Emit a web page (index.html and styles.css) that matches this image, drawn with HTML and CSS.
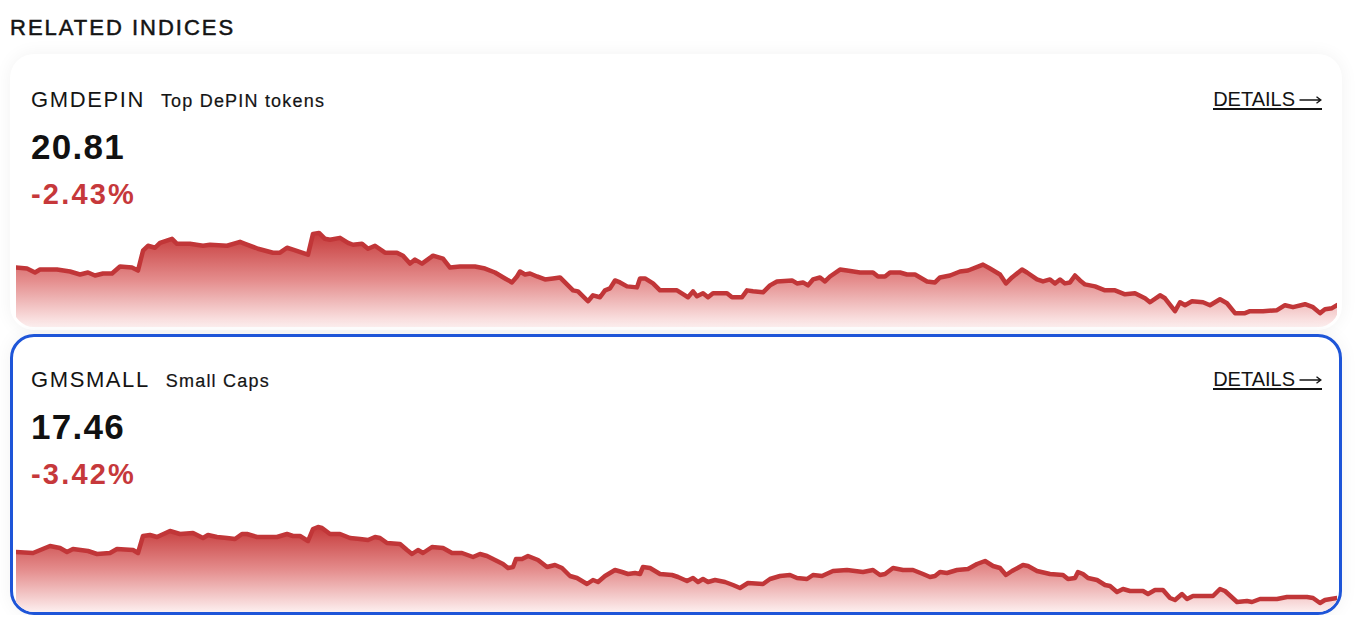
FILE: index.html
```html
<!DOCTYPE html>
<html lang="en">
<head>
<meta charset="utf-8">
<title>Related Indices</title>
<link rel="stylesheet" href="styles.css">
</head>
<body>
<section class="related">
  <h2 class="related-title">RELATED INDICES</h2>
  <div class="card-list">
    <article class="card">
      <div class="card-head">
        <div class="card-names">
          <span class="card-symbol">GMDEPIN</span>
          <span class="card-name">Top DePIN tokens</span>
        </div>
        <a class="card-link" href="#">DETAILS<svg class="arrow" viewBox="0 0 23 10" width="23" height="10"><path d="M0.5 5 H21.5 M17.5 1.8 L21.8 5 L17.5 8.2" fill="none" stroke="#141414" stroke-width="1.4"/></svg></a>
      </div>
      <div class="card-value">20.81</div>
      <div class="card-change">-2.43%</div>
      <div class="card-chart">
        <svg class="spark" viewBox="16 220 1321 107" preserveAspectRatio="none">
          <defs>
            <linearGradient id="fill1" gradientUnits="userSpaceOnUse" x1="0" y1="232" x2="0" y2="327">
              <stop offset="0" stop-color="#c63b3b"/>
              <stop offset="0.5" stop-color="#e48c8c"/>
              <stop offset="1" stop-color="#fdefef"/>
            </linearGradient>
          </defs>
          <path class="spark-area" fill="url(#fill1)" d="M16,267 L27,268 35,272 40,269 57,269 70,271 80,274 88,272 95,275 103,273 112,273 120,266 132,267 138,270 143,250 148,245 155,247 160,242 172,238 177,243 190,243 203,245 210,244 227,245 240,241 245,243 258,248 273,252 280,252 287,247 293,249 308,254 313,233 319,232 325,238 330,239 340,237 348,242 353,244 362,243 368,248 375,245 385,252 397,252 403,255 410,263 415,259 422,263 433,255 443,258 450,267 460,266 475,266 485,268 495,272 505,278 512,282 517,276 520,271 525,274 530,273 537,276 545,279 553,278 560,277 573,290 578,291 588,301 593,295 600,297 605,290 610,288 615,280 620,282 627,286 637,287 640,278 645,278 653,283 660,290 677,290 685,295 688,297 693,291 697,296 703,293 708,297 713,293 727,293 732,297 742,297 747,290 753,291 763,292 770,285 777,281 792,280 797,283 803,282 808,285 813,279 820,277 825,281 830,276 840,269 847,270 860,272 873,272 878,276 885,276 890,272 900,272 907,274 915,274 927,281 935,282 940,277 950,275 960,271 968,270 983,264 990,268 1000,274 1006,283 1012,277 1022,269 1027,272 1037,279 1043,281 1050,279 1055,283 1060,279 1065,283 1070,282 1075,275 1080,280 1085,284 1095,286 1105,290 1115,290 1125,294 1135,293 1145,298 1150,302 1160,295 1165,298 1175,311 1180,302 1185,305 1192,301 1203,302 1210,305 1220,299 1227,303 1235,313 1245,313 1250,311 1263,311 1277,310 1285,305 1293,307 1305,304 1313,307 1320,313 1325,309 1332,308 1337,305 L1337,327 L16,327 Z"/>
          <path class="spark-line" vector-effect="non-scaling-stroke" d="M16,267 L27,268 35,272 40,269 57,269 70,271 80,274 88,272 95,275 103,273 112,273 120,266 132,267 138,270 143,250 148,245 155,247 160,242 172,238 177,243 190,243 203,245 210,244 227,245 240,241 245,243 258,248 273,252 280,252 287,247 293,249 308,254 313,233 319,232 325,238 330,239 340,237 348,242 353,244 362,243 368,248 375,245 385,252 397,252 403,255 410,263 415,259 422,263 433,255 443,258 450,267 460,266 475,266 485,268 495,272 505,278 512,282 517,276 520,271 525,274 530,273 537,276 545,279 553,278 560,277 573,290 578,291 588,301 593,295 600,297 605,290 610,288 615,280 620,282 627,286 637,287 640,278 645,278 653,283 660,290 677,290 685,295 688,297 693,291 697,296 703,293 708,297 713,293 727,293 732,297 742,297 747,290 753,291 763,292 770,285 777,281 792,280 797,283 803,282 808,285 813,279 820,277 825,281 830,276 840,269 847,270 860,272 873,272 878,276 885,276 890,272 900,272 907,274 915,274 927,281 935,282 940,277 950,275 960,271 968,270 983,264 990,268 1000,274 1006,283 1012,277 1022,269 1027,272 1037,279 1043,281 1050,279 1055,283 1060,279 1065,283 1070,282 1075,275 1080,280 1085,284 1095,286 1105,290 1115,290 1125,294 1135,293 1145,298 1150,302 1160,295 1165,298 1175,311 1180,302 1185,305 1192,301 1203,302 1210,305 1220,299 1227,303 1235,313 1245,313 1250,311 1263,311 1277,310 1285,305 1293,307 1305,304 1313,307 1320,313 1325,309 1332,308 1337,305"/>
        </svg>
      </div>
    </article>
    <article class="card card-active">
      <div class="card-head">
        <div class="card-names">
          <span class="card-symbol">GMSMALL</span>
          <span class="card-name">Small Caps</span>
        </div>
        <a class="card-link" href="#">DETAILS<svg class="arrow" viewBox="0 0 23 10" width="23" height="10"><path d="M0.5 5 H21.5 M17.5 1.8 L21.8 5 L17.5 8.2" fill="none" stroke="#141414" stroke-width="1.4"/></svg></a>
      </div>
      <div class="card-value">17.46</div>
      <div class="card-change">-3.42%</div>
      <div class="card-chart">
        <svg class="spark" viewBox="16 500 1321 111" preserveAspectRatio="none">
          <defs>
            <linearGradient id="fill2" gradientUnits="userSpaceOnUse" x1="0" y1="526" x2="0" y2="611">
              <stop offset="0" stop-color="#c63b3b"/>
              <stop offset="0.5" stop-color="#e48c8c"/>
              <stop offset="1" stop-color="#fdefef"/>
            </linearGradient>
          </defs>
          <path class="spark-area" fill="url(#fill2)" d="M16,551 L33,552 50,545 60,547 67,551 73,548 88,550 97,553 110,552 117,548 133,549 138,552 143,535 150,534 157,536 170,530 180,533 193,532 203,537 208,534 217,536 227,537 235,538 242,533 247,533 257,536 277,536 287,533 293,535 300,535 308,540 313,528 318,526 322,527 330,533 340,533 350,537 360,538 368,539 375,536 380,537 387,542 400,543 407,549 412,553 418,549 423,552 432,546 443,547 452,552 462,552 473,556 480,553 487,555 497,560 503,563 508,567 513,566 516,558 522,558 528,555 538,559 547,566 555,564 562,567 570,575 577,577 587,583 593,579 598,581 605,575 615,569 622,571 628,573 635,572 640,573 643,566 650,567 660,573 672,574 678,576 687,580 693,577 698,581 703,578 708,581 715,579 725,581 733,584 740,587 748,582 763,583 770,578 780,575 790,574 797,577 807,578 813,574 822,575 833,570 847,569 863,571 873,569 880,574 885,573 893,567 903,569 913,569 923,573 930,576 935,575 940,571 947,572 957,569 968,568 977,563 985,560 993,565 1000,567 1006,574 1012,570 1023,564 1028,565 1037,570 1050,573 1063,574 1068,578 1075,577 1078,571 1083,573 1088,577 1097,579 1105,584 1110,585 1117,591 1123,588 1130,590 1143,590 1148,593 1155,589 1163,589 1170,597 1175,599 1182,593 1187,598 1193,595 1213,595 1220,588 1225,590 1237,601 1247,600 1252,601 1260,598 1277,598 1287,596 1307,596 1313,597 1320,602 1325,599 1337,597 L1337,611 L16,611 Z"/>
          <path class="spark-line" vector-effect="non-scaling-stroke" d="M16,551 L33,552 50,545 60,547 67,551 73,548 88,550 97,553 110,552 117,548 133,549 138,552 143,535 150,534 157,536 170,530 180,533 193,532 203,537 208,534 217,536 227,537 235,538 242,533 247,533 257,536 277,536 287,533 293,535 300,535 308,540 313,528 318,526 322,527 330,533 340,533 350,537 360,538 368,539 375,536 380,537 387,542 400,543 407,549 412,553 418,549 423,552 432,546 443,547 452,552 462,552 473,556 480,553 487,555 497,560 503,563 508,567 513,566 516,558 522,558 528,555 538,559 547,566 555,564 562,567 570,575 577,577 587,583 593,579 598,581 605,575 615,569 622,571 628,573 635,572 640,573 643,566 650,567 660,573 672,574 678,576 687,580 693,577 698,581 703,578 708,581 715,579 725,581 733,584 740,587 748,582 763,583 770,578 780,575 790,574 797,577 807,578 813,574 822,575 833,570 847,569 863,571 873,569 880,574 885,573 893,567 903,569 913,569 923,573 930,576 935,575 940,571 947,572 957,569 968,568 977,563 985,560 993,565 1000,567 1006,574 1012,570 1023,564 1028,565 1037,570 1050,573 1063,574 1068,578 1075,577 1078,571 1083,573 1088,577 1097,579 1105,584 1110,585 1117,591 1123,588 1130,590 1143,590 1148,593 1155,589 1163,589 1170,597 1175,599 1182,593 1187,598 1193,595 1213,595 1220,588 1225,590 1237,601 1247,600 1252,601 1260,598 1277,598 1287,596 1307,596 1313,597 1320,602 1325,599 1337,597"/>
        </svg>
      </div>
    </article>
  </div>
</section>
</body>
</html>
```
FILE: styles.css
```css
* {
  box-sizing: border-box;
}

html, body {
  margin: 0;
  padding: 0;
  background: #ffffff;
}

body {
  font-family: "Liberation Sans", Arial, Helvetica, sans-serif;
  color: #141414;
  overflow: hidden;
}

.related {
  padding: 17px 18px 0 10px;
}

.related-title {
  margin: 0;
  font-size: 22px;
  line-height: 22px;
  font-weight: 400;
  letter-spacing: 2px;
  -webkit-text-stroke: 0.5px #141414;
  color: #141414;
}

.card-list {
  margin-top: 15px;
  display: flex;
  flex-direction: column;
  gap: 4px;
}

.card {
  height: 276px;
  display: flex;
  flex-direction: column;
  border: 3px solid transparent;
  border-radius: 24px;
  background: #ffffff;
  overflow: hidden;
  box-shadow: 0 0 18px rgba(0, 0, 0, 0.055);
}

.card-active {
  height: 281px;
  border-color: #1e55d8;
}

.card-head {
  display: flex;
  justify-content: space-between;
  align-items: flex-start;
  padding: 32px 17px 0 18px;
}

.card-names {
  display: flex;
  align-items: baseline;
  gap: 16px;
  line-height: 22px;
}

.card-symbol {
  font-size: 22px;
  letter-spacing: 1.6px;
  color: #141414;
}

.card-name {
  font-size: 18px;
  letter-spacing: 1.2px;
  color: #141414;
  -webkit-text-stroke: 0.2px #141414;
}

.card-link {
  display: inline-flex;
  align-items: center;
  gap: 4px;
  margin-top: 2px;
  font-size: 20px;
  line-height: 17px;
  color: #141414;
  text-decoration: none;
  border-bottom: 2px solid #141414;
}

.arrow {
  display: block;
  margin-top: 1px;
}

.card-value {
  margin: 17px 0 0 18px;
  font-size: 35px;
  line-height: 35px;
  font-weight: 700;
  letter-spacing: 1.3px;
  color: #111111;
}

.card-change {
  margin: 16px 0 0 18px;
  font-size: 29px;
  line-height: 29px;
  font-weight: 700;
  letter-spacing: 2.2px;
  color: #c6383b;
}

.card-chart {
  flex: 1;
  margin: 12px 2px 0 3px;
  min-height: 0;
}

.spark {
  display: block;
  width: 100%;
  height: 100%;
}

.spark-line {
  fill: none;
  stroke: #c13638;
  stroke-width: 4.5px;
  stroke-linejoin: round;
  stroke-linecap: round;
}
```
